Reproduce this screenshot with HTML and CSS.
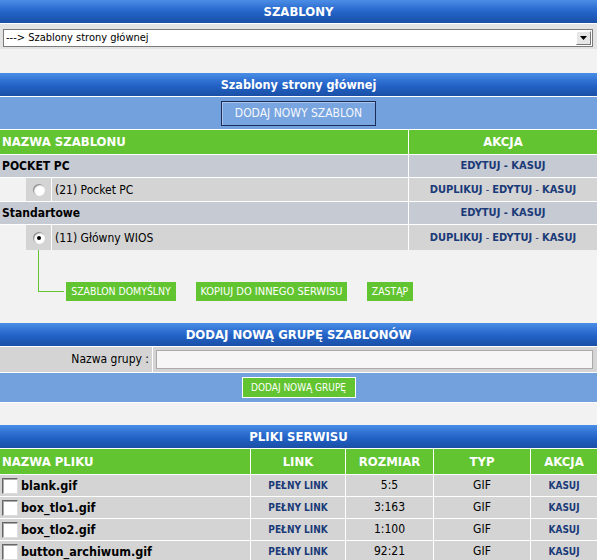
FILE: index.html
```html
<!DOCTYPE html>
<html lang="pl">
<head>
<meta charset="utf-8">
<title>Szablony</title>
<link rel="stylesheet" href="styles.css">
</head>
<body>
<div class="hdr">SZABLONY</div>
<div class="selrow">
  <div class="select">
    <span class="select-text">---&gt; Szablony strony głównej</span>
    <span class="select-btn"><svg width="7" height="4" viewBox="0 0 7 4"><path d="M0 0h7L3.5 4z" fill="#000"/></svg></span>
  </div>
</div>
<div class="spacer24"></div>

<div class="hdr hdr-mixed">Szablony strony głównej</div>
<div class="bluebar bluebar-tall">
  <span class="btn-blue">DODAJ NOWY SZABLON</span>
</div>

<div class="tpl-grid">
  <div class="gh gh-left">NAZWA SZABLONU</div>
  <div class="gh">AKCJA</div>

  <div class="grp">POCKET PC</div>
  <div class="grp act"><a>EDYTUJ</a> - <a>KASUJ</a></div>

  <div class="item">
    <div class="indent"></div>
    <div class="radio-cell"><span class="radio"></span></div>
    <div class="item-text">(21) Pocket PC</div>
  </div>
  <div class="itemact act"><a>DUPLIKUJ</a> - <a>EDYTUJ</a> - <a>KASUJ</a></div>

  <div class="grp">Standartowe</div>
  <div class="grp act"><a>EDYTUJ</a> - <a>KASUJ</a></div>

  <div class="item item-last">
    <div class="indent"></div>
    <div class="radio-cell"><span class="radio checked"></span></div>
    <div class="item-text">(11) Główny WIOS</div>
  </div>
  <div class="itemact item-last act"><a>DUPLIKUJ</a> - <a>EDYTUJ</a> - <a>KASUJ</a></div>
</div>

<div class="tree">
  <div class="connector"></div>
  <span class="btn-green btn-w1">SZABLON DOMYŚLNY</span>
  <span class="btn-green btn-w2">KOPIUJ DO INNEGO SERWISU</span>
  <span class="btn-green btn-w3">ZASTĄP</span>
</div>

<div class="hdr">DODAJ NOWĄ GRUPĘ SZABLONÓW</div>
<div class="form-row">
  <div class="form-label">Nazwa grupy :</div>
  <div class="form-field"><div class="input"></div></div>
</div>
<div class="bluebar bluebar-short">
  <span class="btn-green btn-outline">DODAJ NOWĄ GRUPĘ</span>
</div>
<div class="spacer22"></div>

<div class="hdr">PLIKI SERWISU</div>
<div class="files-grid">
  <div class="gh gh-left">NAZWA PLIKU</div>
  <div class="gh">LINK</div>
  <div class="gh">ROZMIAR</div>
  <div class="gh">TYP</div>
  <div class="gh">AKCJA</div>

  <div class="fc fname"><span class="chk"></span>blank.gif</div>
  <div class="fc act"><a>PEŁNY LINK</a></div>
  <div class="fc">5:5</div>
  <div class="fc">GIF</div>
  <div class="fc act"><a>KASUJ</a></div>

  <div class="fc fname"><span class="chk"></span>box_tlo1.gif</div>
  <div class="fc act"><a>PEŁNY LINK</a></div>
  <div class="fc">3:163</div>
  <div class="fc">GIF</div>
  <div class="fc act"><a>KASUJ</a></div>

  <div class="fc fname"><span class="chk"></span>box_tlo2.gif</div>
  <div class="fc act"><a>PEŁNY LINK</a></div>
  <div class="fc">1:100</div>
  <div class="fc">GIF</div>
  <div class="fc act"><a>KASUJ</a></div>

  <div class="fc fname"><span class="chk"></span>button_archiwum.gif</div>
  <div class="fc act"><a>PEŁNY LINK</a></div>
  <div class="fc">92:21</div>
  <div class="fc">GIF</div>
  <div class="fc act"><a>KASUJ</a></div>
</div>
</body>
</html>
```

FILE: styles.css
```css
* { box-sizing: border-box; }
html, body { margin: 0; padding: 0; }
body {
  background: #f2f2f2;
  font-family: "DejaVu Sans Condensed", "DejaVu Sans", sans-serif;
  font-stretch: condensed;
  font-size: 12px;
  color: #000;
  width: 597px;
  overflow: hidden;
}

.hdr {
  height: 24px;
  line-height: 23px;
  border-bottom: 1px solid #fff;
  background: linear-gradient(to bottom, #4b8ee6 0%, #2f70d2 35%, #2160c2 60%, #1a4fa6 100%);
  color: #fff;
  font-weight: bold;
  font-size: 13px;
  text-align: center;
}
.hdr-mixed { font-size: 12.5px; }

.selrow {
  height: 25px;
  background: #e3e3e3;
  padding: 5px 4px 0 3px;
}
.select {
  height: 18px;
  background: #fff;
  border: 1px solid #7a7a7a;
  display: flex;
  align-items: center;
  justify-content: space-between;
  padding: 0 1px 0 2px;
}
.select-text { font-size: 11px; line-height: 16px; }
.select-btn {
  width: 15px;
  height: 14px;
  background: #e6e6e6;
  border: 1px solid;
  border-color: #fff #777 #777 #fff;
  display: flex;
  align-items: center;
  justify-content: center;
}
.spacer24 { height: 24px; }
.spacer22 { height: 22px; }

.bluebar {
  background: #72a1dd;
  display: flex;
  justify-content: center;
  align-items: center;
  border-bottom: 1px solid #fff;
}
.bluebar-tall { height: 33px; }
.bluebar-short { height: 30px; }

.btn-blue {
  height: 25px;
  width: 155px;
  border: 1px solid #1c2c56;
  box-shadow: inset 1px 1px 0 #a9c4ec;
  background: #78a5df;
  color: #f4f7fd;
  font-size: 12px;
  display: flex;
  align-items: center;
  justify-content: center;
}

.tpl-grid {
  display: grid;
  grid-template-columns: 408px 188px;
  column-gap: 1px;
  background: #fff;
}
.gh {
  background: #62c430;
  color: #fff;
  font-weight: bold;
  font-size: 13px;
  height: 24px;
  line-height: 24px;
  text-align: center;
  margin-bottom: 1px;
}
.gh-left { text-align: left; padding-left: 2px; }

.grp {
  background: #c6cad2;
  height: 22px;
  line-height: 22px;
  font-weight: bold;
  font-size: 12px;
  padding-left: 2px;
  margin-bottom: 1px;
}
.act {
  text-align: center;
  font-size: 11px;
  color: #1a3a78;
}
.grp.act { padding-left: 0; font-size: 11px; }
.act a { font-weight: bold; color: #1a3a78; text-decoration: none; }

.item {
  display: flex;
  height: 23px;
  margin-bottom: 1px;
  background: #d4d4d4;
}
.item-last { margin-bottom: 0; height: 25px; }
.indent { width: 26px; background: #f2f2f2; }
.radio-cell {
  width: 26px;
  border-right: 1px solid #fff;
  display: flex;
  align-items: center;
  padding-left: 7px;
}
.item-text {
  padding-left: 3px;
  display: flex;
  align-items: center;
  font-size: 12px;
}
.itemact {
  background: #d4d4d4;
  height: 23px;
  line-height: 23px;
  margin-bottom: 1px;
}
.itemact.item-last { margin-bottom: 0; height: 25px; line-height: 25px; }

.radio {
  width: 12px;
  height: 12px;
  border-radius: 50%;
  background: radial-gradient(circle at 60% 60%, #fff 0 40%, #e8e8e8 70%, #bbb 100%);
  box-shadow: inset 1px 1px 1px #888;
  display: flex;
  align-items: center;
  justify-content: center;
}
.radio.checked::after {
  content: "";
  width: 4px;
  height: 4px;
  border-radius: 50%;
  background: #000;
}

.tree {
  height: 73px;
  display: flex;
  align-items: flex-end;
  padding-left: 38px;
  padding-bottom: 22px;
}
.connector {
  width: 26px;
  height: 42px;
  border-left: 1px solid #62c430;
  border-bottom: 1px solid #62c430;
  margin-bottom: 9px;
  margin-right: 2px;
}
.btn-green {
  background: #62c430;
  color: #fff;
  font-size: 10.4px;
  height: 19px;
  line-height: 19px;
  text-align: center;
  white-space: nowrap;
  margin-right: 20px;
}
.btn-w1 { width: 110px; }
.btn-w2 { width: 151px; font-size: 11px; }
.btn-w3 { width: 46px; }

.form-row {
  display: flex;
  height: 26px;
  background: #fff;
  border-bottom: 1px solid #fff;
}
.form-label {
  width: 152px;
  background: #d4d4d4;
  text-align: right;
  padding-right: 3px;
  line-height: 25px;
  font-size: 12px;
  margin-right: 1px;
}
.form-field {
  flex: 1;
  background: #d4d4d4;
  padding: 3px 4px 0 3px;
}
.input {
  height: 19px;
  background: #f6f6f6;
  border: 1px solid #aaa;
}
.btn-outline {
  border: 1px solid #fff;
  height: 21px;
  line-height: 19px;
  width: 114px;
  margin: 0;
  font-size: 10px;
}

.files-grid {
  display: grid;
  grid-template-columns: 250px 94px 87px 96px 66px;
  column-gap: 1px;
  background: #fff;
}
.files-grid .gh { height: 25px; line-height: 25px; }
.fc {
  background: #d4d4d4;
  height: 21px;
  line-height: 21px;
  margin-bottom: 1px;
  text-align: center;
  font-size: 12px;
}
.fc.act { font-size: 10px; }
.fname {
  text-align: left;
  font-weight: bold;
  font-size: 12.5px;
  display: flex;
  align-items: center;
  padding-left: 2px;
}
.chk {
  width: 16px;
  height: 16px;
  background: #fff;
  border: 1px solid;
  border-color: #666 #ddd #ddd #666;
  box-shadow: inset 1px 1px 0 #aaa;
  margin-right: 3px;
}
```
